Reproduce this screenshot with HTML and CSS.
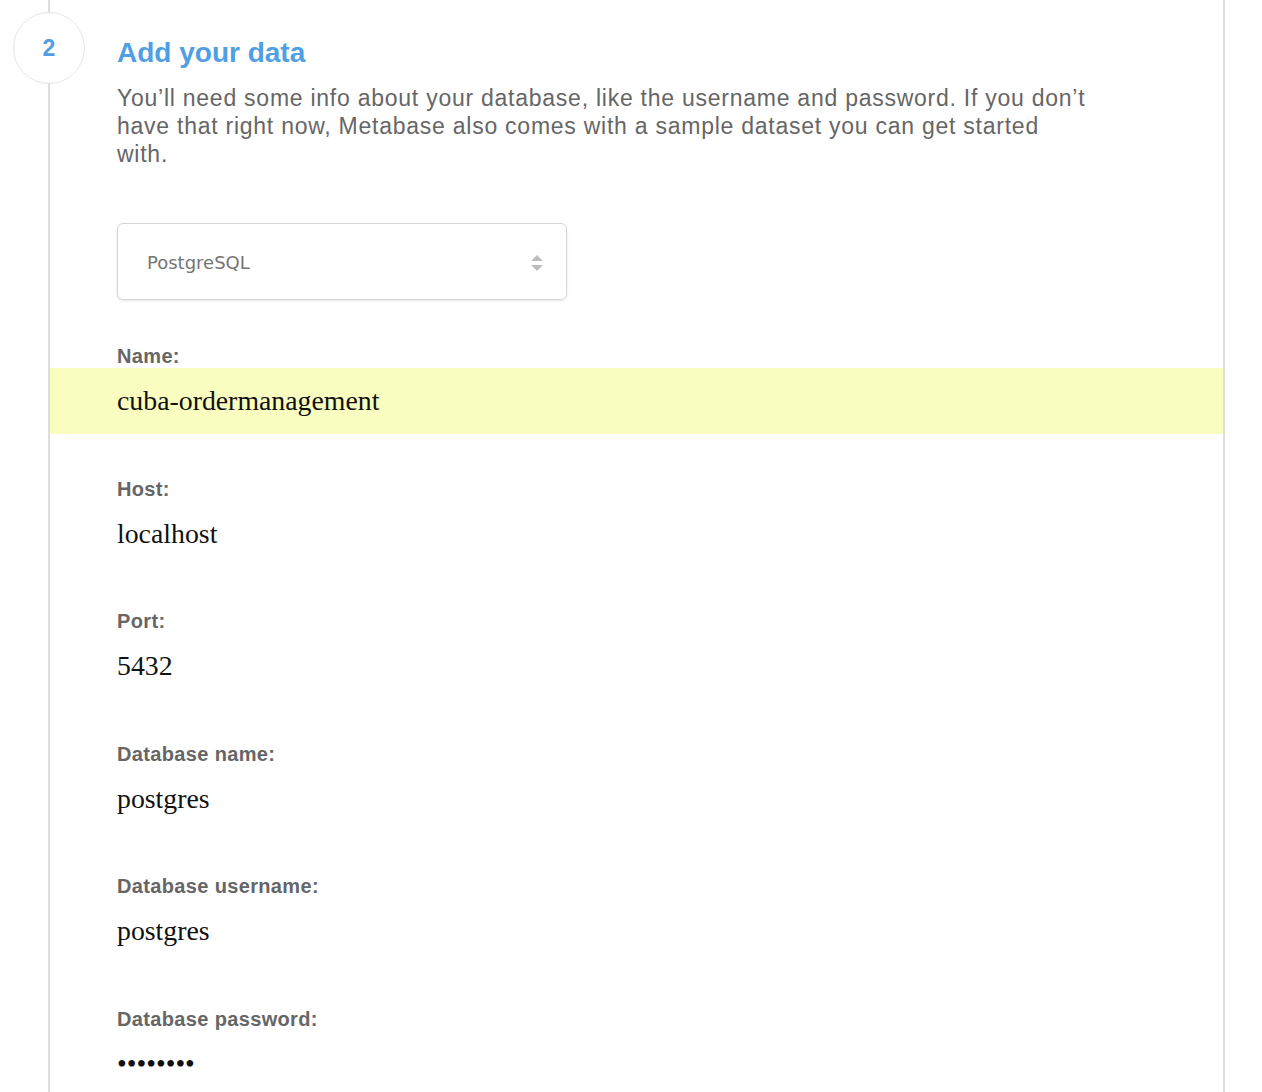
FILE: index.html
```html
<!DOCTYPE html>
<html>
<head>
<meta charset="utf-8">
<title>Add your data</title>
<link rel="stylesheet" href="styles.css">
</head>
<body>
<section class="step">
  <div class="step-num">2</div>
  <div class="step-body">
    <h2 class="step-title">Add your data</h2>
    <p class="step-desc">You’ll need some info about your database, like the username and password. If you don’t have that right now, Metabase also comes with a sample dataset you can get started with.</p>
    <div class="select">
      <span class="select-text">PostgreSQL</span>
      <svg class="select-arrows" width="14" height="18" viewBox="0 0 14 18">
        <path d="M7 1 L13 7 L1 7 Z" fill="#bdbdbd"/>
        <path d="M1 11 L13 11 L7 17 Z" fill="#bdbdbd"/>
      </svg>
    </div>
  </div>
  <div class="fields">
    <div class="field">
      <label class="field-label">Name:</label>
      <div class="field-input highlight">cuba-ordermanagement</div>
    </div>
    <div class="field">
      <label class="field-label">Host:</label>
      <div class="field-input">localhost</div>
    </div>
    <div class="field">
      <label class="field-label">Port:</label>
      <div class="field-input">5432</div>
    </div>
    <div class="field">
      <label class="field-label">Database name:</label>
      <div class="field-input">postgres</div>
    </div>
    <div class="field">
      <label class="field-label">Database username:</label>
      <div class="field-input">postgres</div>
    </div>
    <div class="field">
      <label class="field-label">Database password:</label>
      <div class="field-input">••••••••</div>
    </div>
  </div>
</section>
</body>
</html>
```

FILE: styles.css
```css
html, body {
  margin: 0;
  padding: 0;
  background: #fff;
}

body {
  font-family: "Liberation Sans", Arial, Helvetica, sans-serif;
}

.step {
  position: relative;
  margin-left: 48px;
  width: 1173px;
  border-left: 2px solid #dedede;
  border-right: 2px solid #dedede;
  padding-top: 37px;
  padding-bottom: 40px;
}

.step-num {
  position: absolute;
  left: -37px;
  top: 12px;
  width: 72px;
  height: 72px;
  box-sizing: border-box;
  border: 1px solid #e6e6e6;
  border-radius: 50%;
  background: #fff;
  display: flex;
  align-items: center;
  justify-content: center;
  color: #509ee3;
  font-weight: bold;
  font-size: 23px;
}

.step-body {
  padding-left: 67px;
}

.step-title {
  margin: 0;
  font-size: 28px;
  line-height: 32px;
  font-weight: bold;
  color: #509ee3;
}

.step-desc {
  margin: 15px 0 0 0;
  max-width: 974px;
  font-size: 23px;
  line-height: 28px;
  letter-spacing: 0.75px;
  color: #666;
}

.select {
  margin-top: 55px;
  width: 450px;
  height: 77px;
  box-sizing: border-box;
  border: 1px solid #d6d6d6;
  border-radius: 6px;
  box-shadow: 0 1px 3px rgba(0, 0, 0, 0.1);
  display: flex;
  align-items: center;
  justify-content: space-between;
  padding: 0 22px 0 29px;
}

.select-text {
  font-family: "DejaVu Sans", "Lucida Grande", sans-serif;
  font-size: 18px;
  color: #757575;
  margin-top: 1px;
}

.select-arrows {
  display: block;
  margin-top: 3px;
}

.fields {
  padding-top: 44px;
}

.field {
  margin-bottom: 42.5px;
}

.field-label {
  display: block;
  padding-left: 67px;
  font-size: 20px;
  line-height: 24px;
  letter-spacing: 0.35px;
  font-weight: bold;
  color: #666;
}

.field-input {
  height: 66px;
  line-height: 66px;
  padding-left: 67px;
  font-family: "Liberation Serif", "Times New Roman", serif;
  font-size: 27.8px;
  color: #111;
}

.field-input.highlight {
  background: #fafdc0;
}
```
